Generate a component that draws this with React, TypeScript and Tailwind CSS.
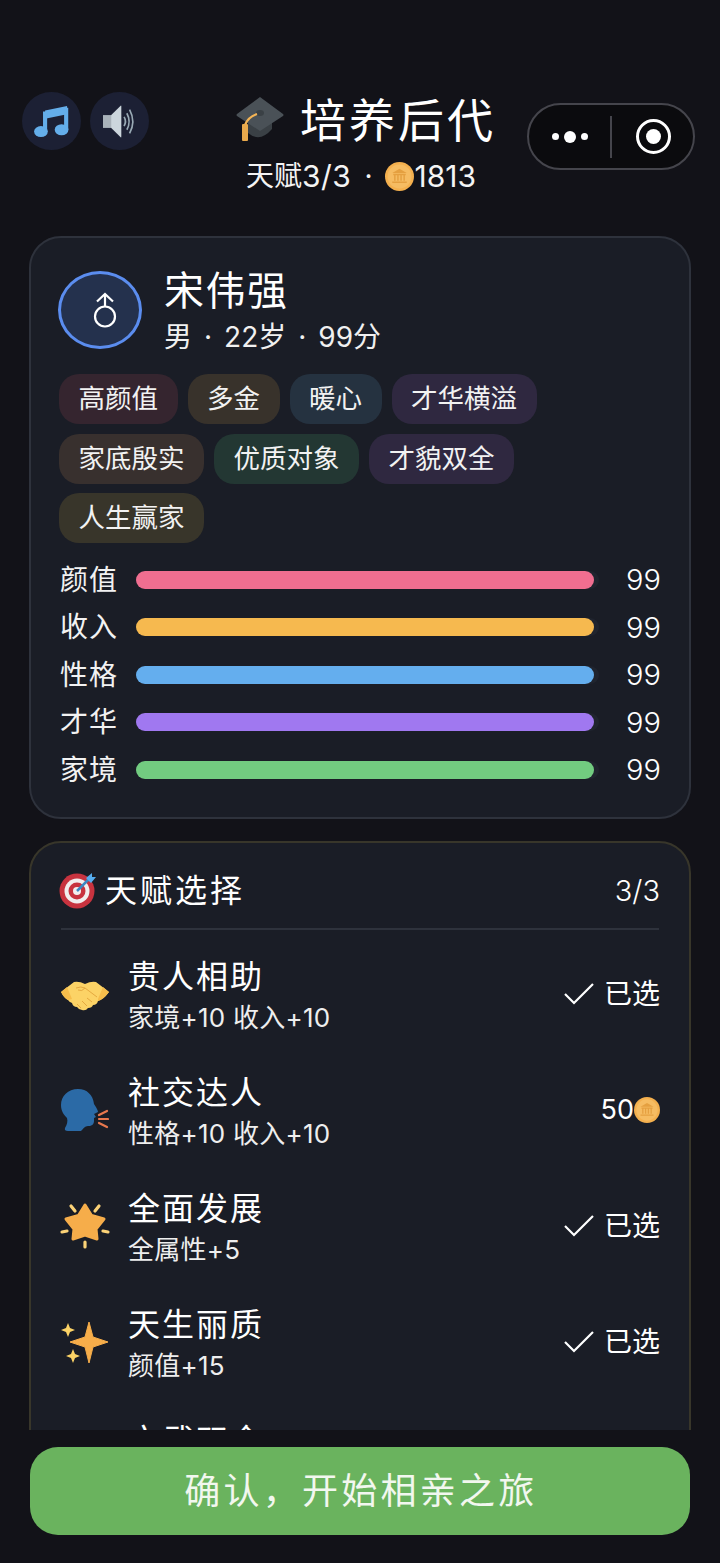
const font = { fontFamily: '"Inter", "Noto Sans CJK SC", sans-serif' };

const MusicIcon = () => (
  <svg width="37" height="33" viewBox="0 0 38 36">
    <path d="M12 6 L36 1 L36 10 L12 15 Z" fill="#64aeea" />
    <path d="M12 7 L12 29 M35 3 L35 27" stroke="#64aeea" strokeWidth="4.5" />
    <ellipse cx="7.5" cy="29" rx="7.5" ry="6" fill="#64aeea" />
    <ellipse cx="30" cy="27" rx="7.5" ry="6" fill="#64aeea" />
  </svg>
);

const SpeakerIcon = () => (
  <svg width="35" height="33" viewBox="0 0 36 36">
    <rect x="0" y="11" width="10" height="14" fill="#a9b2ba" />
    <path d="M9 11 L19 1 Q20 0 20 2 L20 34 Q20 36 19 35 L9 25 Z" fill="#ccd6dd" />
    <path d="M23 13 Q26 18 23 23" fill="none" stroke="#99aab5" strokeWidth="1.8" />
    <path d="M26 9 Q31 18 26 27" fill="none" stroke="#99aab5" strokeWidth="1.8" />
    <path d="M29 5 Q36 18 29 31" fill="none" stroke="#99aab5" strokeWidth="1.8" />
  </svg>
);

const CapIcon = () => (
  <svg width="48" height="46" viewBox="0 0 48 46">
    <path d="M12 20 L36 20 L36 32 Q24 46 12 36 Z" fill="#3a4045" />
    <path d="M24 0 L47 17 Q48 18 47 19 L24 34 L1 19 Q0 18 1 17 Z" fill="#4a5157" />
    <ellipse cx="24" cy="16" rx="4" ry="3" fill="#3a4045" />
    <path d="M21 17 Q12 20 9 28" fill="none" stroke="#f4b455" strokeWidth="2.2" />
    <rect x="6" y="27" width="6" height="17" rx="1" fill="#e9a94c" />
  </svg>
);

const Coin = ({ size }: { size: number }) => (
  <svg width={size} height={size} viewBox="0 0 28 28" className="shrink-0">
    <circle cx="14" cy="14" r="14" fill="#f4b04e" />
    <circle cx="14" cy="14" r="11.5" fill="#f6bc62" />
    <path d="M14 6.5 L21 10.5 L7 10.5 Z" fill="#e5a040" />
    <path d="M8 12 H20 M9.5 12 V18 M12.5 12 V18 M15.5 12 V18 M18.5 12 V18 M7 19.5 H21" stroke="#e5a040" strokeWidth="1.4" fill="none" />
  </svg>
);

const MarsIcon = () => (
  <svg width="26" height="36" viewBox="0 0 26 36" fill="none" stroke="#ffffff" strokeWidth="2.2" className="ml-[10px]">
    <circle cx="13" cy="24.5" r="10" />
    <path d="M13 14.5 V2 M5 9.5 L13 2 L21 9.5" />
  </svg>
);

const TargetIcon = () => (
  <svg width="38" height="36" viewBox="0 0 38 36" className="-ml-[2px]">
    <circle cx="18" cy="18" r="17.5" fill="#c8333f" />
    <circle cx="18" cy="18" r="12.5" fill="#f2eeee" />
    <circle cx="18" cy="18" r="8.5" fill="#c8333f" />
    <circle cx="18" cy="18" r="4" fill="#f2eeee" />
    <path d="M18 18 L31 5" stroke="#3b88c3" strokeWidth="2.5" />
    <path d="M27 5 L33 0 L33 4 L37 4 L32 10 Z" fill="#55acee" />
  </svg>
);

const HandshakeIcon = () => (
  <svg width="48" height="30" viewBox="0 0 48 30">
    <path d="M0 11 L13 1 Q18 0 24 3 Q30 0 35 1 L48 11 Q42 19 37 20 Q36 24 32 24 Q31 27 27 27 Q25 30 21 29 Q18 29 16 26 Q12 26 11 22 Q8 21 7 19 Q3 17 0 11 Z" fill="#fcd366" />
    <path d="M0 11 L6 6 L11 18 L7 19 Q3 17 0 11 Z M48 11 L42 6 L37 18 L37 20 Q42 19 48 11 Z" fill="#f6bd4b" />
    <path d="M15 7 Q20 5 24 7 L36 16 M24 7 Q21 11 17 9 M31 21 L26 17 M26 25 L21 20 M20 27 L16 23" fill="none" stroke="#e5a93f" strokeWidth="1" />
  </svg>
);

const SpeakingHeadIcon = () => (
  <svg width="48" height="44" viewBox="0 0 48 44" className="-mt-[2px]">
    <path d="M17 0 C7 0 0 7 0 16 C0 22 3 26 6 29 C7 32 6 36 4 39 Q3 42 7 42 L20 42 C22 40 24 37 27 37 C31 37 33 35 33 32 L33 29 L35 28 L33 25 L37 23 Q37 21 33 15 C32 6 26 0 17 0 Z" fill="#2b6aa6" />
    <path d="M38 26 L46 22 M38 30 L47 30 M38 34 L46 38" stroke="#e8784e" strokeWidth="2.2" strokeLinecap="round" />
  </svg>
);

const GlowStarIcon = () => (
  <svg width="50" height="48" viewBox="0 0 50 48" className="-mt-[4px] -ml-[1px]">
    <path d="M25 3 L31.5 13.5 L44 17 L36 27 L37 37 L25 33 L13 37 L14 27 L6 17 L18.5 13.5 Z" fill="#f6ad4a" stroke="#f6ad4a" strokeWidth="3" strokeLinejoin="round" />
    <path d="M25 40 V45 M43 29 L48 30 M7 29 L2 30 M11 4 L15 9 M39 4 L35 9" stroke="#fbd277" strokeWidth="3.2" strokeLinecap="round" />
  </svg>
);

const SparklesIcon = () => (
  <svg width="48" height="42" viewBox="0 0 48 42" className="-mt-[2px]">
    <path d="M28 0 L32 15 L47 20 L32 25 L28 41 L24 25 L9 20 L24 15 Z" fill="#f6ad4a" stroke="#f6ad4a" strokeLinejoin="round" />
    <path d="M7 1 L9 6 L14 8 L9 10 L7 15 L5 10 L0 8 L5 6 Z" fill="#fcd366" />
    <path d="M12 27 L14 32 L19 34 L14 36 L12 41 L10 36 L5 34 L10 32 Z" fill="#fcd366" />
  </svg>
);

const CheckIcon = () => (
  <svg width="30" height="22" viewBox="0 0 30 22" fill="none" stroke="#ffffff" strokeWidth="2.2">
    <path d="M1 11 L10 20 L29 1" />
  </svg>
);

const tags = [
  { label: "高颜值", bg: "bg-[#35252f]" },
  { label: "多金", bg: "bg-[#38322b]" },
  { label: "暖心", bg: "bg-[#253240]" },
  { label: "才华横溢", bg: "bg-[#2f2840]" },
  { label: "家底殷实", bg: "bg-[#38302e]" },
  { label: "优质对象", bg: "bg-[#233733]" },
  { label: "才貌双全", bg: "bg-[#2f2840]" },
  { label: "人生赢家", bg: "bg-[#38352a]" },
];

const stats = [
  { label: "颜值", value: 99, color: "bg-[#f06e90]" },
  { label: "收入", value: 99, color: "bg-[#f6b94f]" },
  { label: "性格", value: 99, color: "bg-[#64aeee]" },
  { label: "才华", value: 99, color: "bg-[#a078f0]" },
  { label: "家境", value: 99, color: "bg-[#72cc80]" },
];

const talents = [
  { icon: <HandshakeIcon />, name: "贵人相助", desc: "家境+10 收入+10", picked: true },
  { icon: <SpeakingHeadIcon />, name: "社交达人", desc: "性格+10 收入+10", picked: false },
  { icon: <GlowStarIcon />, name: "全面发展", desc: "全属性+5", picked: true },
  { icon: <SparklesIcon />, name: "天生丽质", desc: "颜值+15", picked: true },
  { icon: null, name: "文武双全", desc: "", picked: undefined },
];

export default function App() {
  return (
    <div style={font} className="relative h-[1563px] flex flex-col overflow-hidden bg-[#121218] text-white">
      <div className="absolute left-[22px] top-[92px] flex gap-[9px]">
        <div className="w-[59px] h-[58px] rounded-full bg-[#1c2034] flex items-center justify-center">
          <MusicIcon />
        </div>
        <div className="w-[59px] h-[58px] rounded-full bg-[#1c2034] flex items-center justify-center">
          <SpeakerIcon />
        </div>
      </div>

      <div className="absolute left-[527px] top-[103px] w-[168px] h-[67px] rounded-full border-2 border-[#45454c] bg-[#0b0b0e] flex items-center">
        <div className="w-[81px] flex items-center justify-center gap-[5px]">
          <span className="w-[7px] h-[7px] rounded-full bg-white" />
          <span className="w-[12px] h-[12px] rounded-full bg-white" />
          <span className="w-[7px] h-[7px] rounded-full bg-white" />
        </div>
        <div className="w-[2px] h-[42px] bg-[#45454c]" />
        <div className="flex-1 pl-[2px] flex items-center justify-center">
          <div className="w-[35px] h-[35px] rounded-full border-[3px] border-white flex items-center justify-center">
            <span className="w-[15px] h-[15px] rounded-full bg-white" />
          </div>
        </div>
      </div>

      <div className="pt-[92px] flex flex-col items-center">
        <div className="h-[56px] pl-[12px] flex items-center gap-[16px] text-[46px] leading-[56px] tracking-[3px]">
          <CapIcon />
          <span>培养后代</span>
        </div>
        <div className="mt-[8px] h-[40px] pl-[2px] flex items-center text-[28px] text-[#f4f4f4]">
          <span>天赋</span>
          <span className="text-[30px] tracking-[0.5px]">3/3</span>
          <span className="mx-[13px]">·</span>
          <Coin size={29} />
          <span className="text-[30px]">1813</span>
        </div>
      </div>

      <div className="mt-[40px] flex-1 min-h-0 overflow-hidden px-[29px]">
        <div className="rounded-[32px] border-2 border-[#2e323c] bg-[#1a1d26] px-[28px] pt-[33px] pb-[23px]">
          <div className="flex items-start gap-[22px]">
            <div className="w-[84px] h-[78px] -ml-[1px] shrink-0 rounded-[50%] border-[3px] border-[#5b8def] bg-[#24314d] flex items-center justify-center">
              <MarsIcon />
            </div>
            <div>
              <div className="text-[40px] leading-[40px] tracking-[1.5px]">宋伟强</div>
              <div className="mt-[8px] h-[36px] flex items-center text-[28px] text-[#f0f0f0]">
                <span>男</span>
                <span className="mx-[12px]">·</span>
                <span>22岁</span>
                <span className="mx-[12px]">·</span>
                <span>99分</span>
              </div>
            </div>
          </div>

          <div className="mt-[19px] flex flex-wrap gap-x-[10px] gap-y-[9.5px]">
            {tags.map((tag) => (
              <span key={tag.label} className={`h-[50px] px-[19.5px] rounded-[20px] flex items-center text-[26.5px] text-[#f2f2f2] ${tag.bg}`}>
                {tag.label}
              </span>
            ))}
          </div>

          <div className="mt-[13px] flex flex-col">
            {stats.map((stat) => (
              <div key={stat.label} className="h-[47.5px] flex items-center">
                <span className="w-[77px] pl-[1px] text-[28px] tracking-[1px] text-[#f2f2f2]">{stat.label}</span>
                <div className="w-[463px] h-[18px] rounded-full bg-[#20242e]">
                  <div className={`h-full rounded-full ${stat.color}`} style={{ width: `${stat.value}%` }} />
                </div>
                <span className="flex-1 text-right text-[29px] font-light">{stat.value}</span>
              </div>
            ))}
          </div>
        </div>

        <div className="mt-[22px] rounded-[32px] border-2 border-[#38362a] bg-[#1a1d26] px-[30px]">
          <div className="h-[87px] pt-[11px] flex items-center border-b-2 border-[#2e323c]">
            <TargetIcon />
            <span className="ml-[8px] text-[32px] tracking-[3px]">天赋选择</span>
            <span className="ml-auto -mr-[1px] text-[29px] font-light">3/3</span>
          </div>
          <div className="pt-[8px]">
            {talents.map((t) => (
              <div key={t.name} className="h-[116px] flex items-center">
                <div className="w-[67px] flex items-center">{t.icon}</div>
                <div>
                  <div className="text-[32px] leading-[42px] tracking-[2px]">{t.name}</div>
                  <div className="mt-[2px] h-[36px] text-[26px] leading-[36px] tracking-[0.25px] text-[#eeeeee]">{t.desc}</div>
                </div>
                {t.picked !== undefined && (
                  <div className="ml-auto -mr-[1px] mb-[3px] flex items-center text-[28px]">
                    {t.picked ? (
                      <>
                        <CheckIcon />
                        <span className="ml-[10px]">已选</span>
                      </>
                    ) : (
                      <>
                        <span className="text-[27px]">50</span>
                        <Coin size={26} />
                      </>
                    )}
                  </div>
                )}
              </div>
            ))}
          </div>
        </div>
      </div>

      <div className="px-[30px] pt-[17px] pb-[28px] bg-[#121218]">
        <button className="w-full h-[88px] pl-[2px] rounded-[28px] bg-[#6ab35e] text-[36px] tracking-[3.25px] text-[#f2f7ef]">
          确认，开始相亲之旅
        </button>
      </div>
    </div>
  );
}
